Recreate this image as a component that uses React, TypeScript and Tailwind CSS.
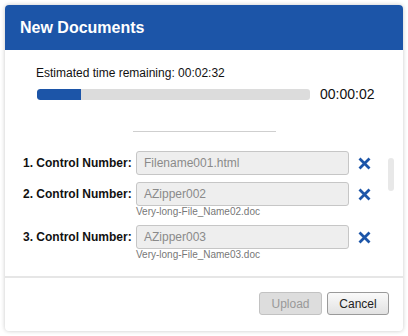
import React from 'react';

const rows = [
    { n: 1, value: 'Filename001.html', file: '' },
    { n: 2, value: 'AZipper002', file: 'Very-long-File_Name02.doc' },
    { n: 3, value: 'AZipper003', file: 'Very-long-File_Name03.doc' },
];

const RemoveIcon = () => (
    <svg width="13" height="13" viewBox="0 0 13 13" className="block">
        <path d="M1.5 1.5 L11.5 11.5 M11.5 1.5 L1.5 11.5" stroke="#1c55a8" strokeWidth="2.8" strokeLinecap="butt" />
    </svg>
);

const App = () => {
    return (
        <div className="w-[408px] h-[336px] bg-white p-[5px] font-['Liberation_Sans',Arial,sans-serif]">
            <div className="w-[398px] h-[326px] rounded-[4px] bg-white shadow-[0_0_4px_rgba(0,0,0,0.22)] overflow-hidden flex flex-col">
                <div className="h-[45px] bg-[#1c55a8] pl-[15px] flex items-center shrink-0">
                    <h2 className="text-[16px] font-bold text-white leading-none">New Documents</h2>
                </div>

                <div className="pt-[16px] pl-[31px]">
                    <p className="text-[12px] leading-[14px] text-[#111]">Estimated time remaining: 00:02:32</p>
                    <div className="mt-[6px] h-[16px] flex items-center">
                        <div className="ml-[1px] w-[273px] h-[11px] rounded-[3px] bg-[#dcdcdc] overflow-hidden">
                            <div className="h-full w-[44px] bg-[#1c55a8] rounded-l-[3px]"></div>
                        </div>
                        <span className="ml-[10px] text-[14px] leading-[16px] text-[#111]">00:00:02</span>
                    </div>
                </div>

                <div className="mt-[29px] mx-auto w-[143px] h-[1px] bg-[#cfcfcf]"></div>

                <div className="mt-[19px] flex">
                    <div className="flex flex-col gap-[7px]">
                        {rows.map((r) => (
                            <div key={r.n} className="flex items-start">
                                <label className="w-[131px] pl-[18px] pr-[5px] text-right text-[12px] leading-[24px] font-bold text-[#111] whitespace-nowrap">
                                    {r.n}. Control Number:
                                </label>
                                <div className="flex flex-col">
                                    <div className="w-[213px] h-[24px] px-[7px] flex items-center rounded-[3px] border border-[#c6c6c6] bg-[#eeeeee] text-[12px] text-[#8a8a8a]">
                                        {r.value}
                                    </div>
                                    {r.file && (
                                        <span className="text-[10px] leading-[12px] text-[#777]">{r.file}</span>
                                    )}
                                </div>
                                <button className="ml-[9px] h-[24px] flex items-center">
                                    <RemoveIcon />
                                </button>
                            </div>
                        ))}
                    </div>
                    <div className="ml-[17px] mt-[7px] w-[6px] h-[33px] rounded-full bg-[#e8e8e8]"></div>
                </div>

                <div className="mt-[15px] border-t-2 border-[#e6e6e6] flex justify-end gap-[5px] pt-[14px] pr-[14px]">
                    <button disabled className="w-[63px] h-[23px] rounded-[3px] border border-[#c2c2c2] bg-[#dddddd] text-[12px] text-[#999]">
                        Upload
                    </button>
                    <button className="w-[62px] h-[23px] rounded-[3px] border border-[#9a9a9a] bg-gradient-to-b from-[#fafafa] to-[#e2e2e2] text-[12px] text-[#222]">
                        Cancel
                    </button>
                </div>
            </div>
        </div>
    );
};

export default App;
